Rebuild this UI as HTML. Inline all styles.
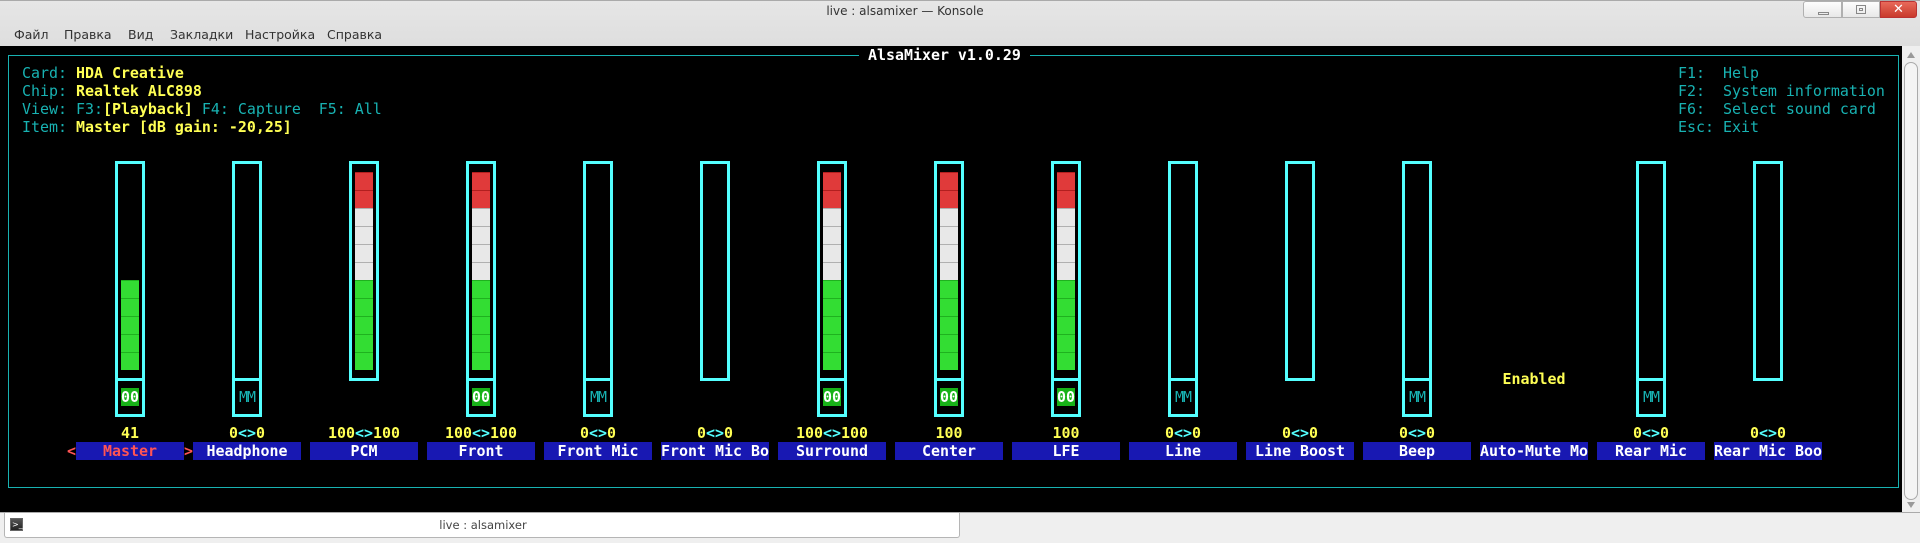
<!DOCTYPE html>
<html><head><meta charset="utf-8"><style>
*{margin:0;padding:0;box-sizing:border-box}
body{width:1920px;height:543px;overflow:hidden;background:#efefef;position:relative;font-family:"DejaVu Sans","Liberation Sans",sans-serif}
#title{position:absolute;left:0;top:0;width:1920px;height:46px;background:linear-gradient(#e6e6e6,#dedede);border-top:1px solid #aaa}
#title .t{position:absolute;left:0;width:1810px;top:3px;text-align:center;font-size:12px;color:#333}
.menu{position:absolute;top:26px;font-size:12.5px;color:#333}
.wb{position:absolute;top:0;height:17px;border:1px solid #b0b0b0;background:linear-gradient(#fdfdfd,#e8e8e8)}
#term{position:absolute;left:0;top:46px;width:1902px;height:466px;background:#000}
#sb{position:absolute;left:1902px;top:46px;width:18px;height:466px;background:#efefef}
.mono{font-family:"DejaVu Sans Mono","Liberation Mono",monospace;font-size:14.95px;line-height:18px;white-space:pre;position:absolute}
.c{color:#18b2b2}.y{color:#ffff54;font-weight:bold}.w{color:#fff;font-weight:bold}
.ch{position:absolute;top:0;width:200px;height:512px}
.box{position:absolute;left:111px;top:161px;width:30px;height:220px;border:3px solid #54ffff}
.low{position:absolute;left:111px;top:378px;width:30px;height:39px;border:3px solid #54ffff}
.fill{position:absolute;left:117px;width:18px}
.g{background:repeating-linear-gradient(#1fb21f 0 1px,#33dd33 1px 18px)}
.r{background:repeating-linear-gradient(#b21f1f 0 1px,#e03a3a 1px 18px)}
.wh{background:repeating-linear-gradient(#b0b0b0 0 1px,#e8e8e8 1px 18px)}
.oo{position:absolute;left:117px;top:388px;width:18px;height:18px;background:#18b218;color:#fff;font-weight:bold;text-align:center}
.mm{position:absolute;left:117px;top:388px;width:18px;text-align:center;color:#18b2b2;letter-spacing:-1px}
.val{position:absolute;left:72px;top:424px;width:108px;text-align:center}
.lab{position:absolute;left:72px;top:442px;width:108px;height:18px;background:#1818b2;color:#fff;font-weight:bold;text-align:center;overflow:hidden}
.ar{color:#54ffff}
</style></head><body>
<div id="title"><div class="t">live : alsamixer — Konsole</div>
<div class="menu" style="left:14px">Файл</div>
<div class="menu" style="left:64px">Правка</div>
<div class="menu" style="left:128px">Вид</div>
<div class="menu" style="left:170px">Закладки</div>
<div class="menu" style="left:245px">Настройка</div>
<div class="menu" style="left:327px">Справка</div>
<div class="wb" style="left:1803px;width:39px;border-radius:3px 0 0 3px"><div style="position:absolute;left:14px;top:10px;width:11px;height:3px;border:1px solid #888"></div></div>
<div class="wb" style="left:1842px;width:38px"><div style="position:absolute;left:13px;top:3px;width:10px;height:9px;border:1px solid #888"></div><div style="position:absolute;left:16px;top:6px;width:4px;height:3px;border:1px solid #888"></div></div>
<div class="wb" style="left:1880px;width:37px;background:linear-gradient(#e86a5a,#c93a2c);border-color:#b33;border-radius:0 3px 3px 0;color:#fff;font-weight:bold;font-size:13px;text-align:center;line-height:15px">✕</div>
</div>
<div id="term">
<div style="position:absolute;left:8px;top:9px;width:1891px;height:433px;border:1.5px solid #18b2b2"></div>
</div>
<div class="mono" style="left:859px;top:46px;background:#000;color:#fff;font-weight:bold"> AlsaMixer v1.0.29 </div>
<div class="mono" style="left:22px;top:64px"><span class="c">Card: </span><span class="y">HDA Creative</span>
<span class="c">Chip: </span><span class="y">Realtek ALC898</span>
<span class="c">View: F3:</span><span class="y">[Playback]</span><span class="c"> F4: Capture  F5: All</span>
<span class="c">Item: </span><span class="y">Master [dB gain: -20,25]</span></div>
<div class="mono c" style="left:1678px;top:64px">F1:  Help
F2:  System information
F6:  Select sound card
Esc: Exit</div>

<div class="mono" style="left:0;top:0;width:1902px;height:512px">
<!-- 0 Master -->
<div class="ch" style="left:4px"><div class="box"></div><div class="fill g" style="top:280px;height:90px"></div><div class="low"></div><div class="oo">00</div><div class="val y">41</div><div class="lab" style="color:#ff5454">Master</div><div style="position:absolute;left:63px;top:442px;color:#ff5454;font-weight:bold">&lt;</div><div style="position:absolute;left:180px;top:442px;color:#ff5454;font-weight:bold">&gt;</div></div>
<!-- 1 Headphone -->
<div class="ch" style="left:121px"><div class="box"></div><div class="low"></div><div class="mm">MM</div><div class="val y">0<span class="ar">&lt;&gt;</span>0</div><div class="lab">Headphone</div></div>
<!-- 2 PCM -->
<div class="ch" style="left:238px"><div class="box"></div><div class="fill r" style="top:172px;height:36px"></div><div class="fill wh" style="top:208px;height:72px"></div><div class="fill g" style="top:280px;height:90px"></div><div class="val y">100<span class="ar">&lt;&gt;</span>100</div><div class="lab">PCM</div></div>
<!-- 3 Front -->
<div class="ch" style="left:355px"><div class="box"></div><div class="fill r" style="top:172px;height:36px"></div><div class="fill wh" style="top:208px;height:72px"></div><div class="fill g" style="top:280px;height:90px"></div><div class="low"></div><div class="oo">00</div><div class="val y">100<span class="ar">&lt;&gt;</span>100</div><div class="lab">Front</div></div>
<!-- 4 Front Mic -->
<div class="ch" style="left:472px"><div class="box"></div><div class="low"></div><div class="mm">MM</div><div class="val y">0<span class="ar">&lt;&gt;</span>0</div><div class="lab">Front Mic</div></div>
<!-- 5 Front Mic Bo -->
<div class="ch" style="left:589px"><div class="box"></div><div class="val y">0<span class="ar">&lt;&gt;</span>0</div><div class="lab">Front Mic Bo</div></div>
<!-- 6 Surround -->
<div class="ch" style="left:706px"><div class="box"></div><div class="fill r" style="top:172px;height:36px"></div><div class="fill wh" style="top:208px;height:72px"></div><div class="fill g" style="top:280px;height:90px"></div><div class="low"></div><div class="oo">00</div><div class="val y">100<span class="ar">&lt;&gt;</span>100</div><div class="lab">Surround</div></div>
<!-- 7 Center -->
<div class="ch" style="left:823px"><div class="box"></div><div class="fill r" style="top:172px;height:36px"></div><div class="fill wh" style="top:208px;height:72px"></div><div class="fill g" style="top:280px;height:90px"></div><div class="low"></div><div class="oo">00</div><div class="val y">100</div><div class="lab">Center</div></div>
<!-- 8 LFE -->
<div class="ch" style="left:940px"><div class="box"></div><div class="fill r" style="top:172px;height:36px"></div><div class="fill wh" style="top:208px;height:72px"></div><div class="fill g" style="top:280px;height:90px"></div><div class="low"></div><div class="oo">00</div><div class="val y">100</div><div class="lab">LFE</div></div>
<!-- 9 Line -->
<div class="ch" style="left:1057px"><div class="box"></div><div class="low"></div><div class="mm">MM</div><div class="val y">0<span class="ar">&lt;&gt;</span>0</div><div class="lab">Line</div></div>
<!-- 10 Line Boost -->
<div class="ch" style="left:1174px"><div class="box"></div><div class="val y">0<span class="ar">&lt;&gt;</span>0</div><div class="lab">Line Boost</div></div>
<!-- 11 Beep -->
<div class="ch" style="left:1291px"><div class="box"></div><div class="low"></div><div class="mm">MM</div><div class="val y">0<span class="ar">&lt;&gt;</span>0</div><div class="lab">Beep</div></div>
<!-- 12 Auto-Mute -->
<div class="ch" style="left:1408px"><div class="y" style="position:absolute;left:72px;top:370px;width:108px;text-align:center">Enabled</div><div class="lab">Auto-Mute Mo</div></div>
<!-- 13 Rear Mic -->
<div class="ch" style="left:1525px"><div class="box"></div><div class="low"></div><div class="mm">MM</div><div class="val y">0<span class="ar">&lt;&gt;</span>0</div><div class="lab">Rear Mic</div></div>
<!-- 14 Rear Mic Boo -->
<div class="ch" style="left:1642px"><div class="box"></div><div class="val y">0<span class="ar">&lt;&gt;</span>0</div><div class="lab">Rear Mic Boo</div></div>
</div>

<div id="sb">
<div style="position:absolute;left:5px;top:6px;width:0;height:0;border-left:4px solid transparent;border-right:4px solid transparent;border-bottom:6px solid #999"></div>
<div style="position:absolute;left:2px;top:16px;width:14px;height:438px;border:1px solid #aaa;border-radius:7px;background:#f4f4f4"></div>
<div style="position:absolute;left:5px;top:456px;width:0;height:0;border-left:4px solid transparent;border-right:4px solid transparent;border-top:6px solid #999"></div>
</div>
<div style="position:absolute;left:0;top:512px;width:1920px;height:1px;background:#aaa"></div>
<div style="position:absolute;left:4px;top:513px;width:956px;height:25px;background:#fff;border:1px solid #b5b5b5;border-top:none;border-radius:0 0 3px 3px">
<div style="position:absolute;left:5px;top:5px;width:13px;height:13px;border:1px solid #666;background:linear-gradient(#555,#222);color:#fff;font-size:8px;line-height:11px;padding-left:1px">&gt;_</div>
<div style="position:absolute;left:0;width:956px;top:5px;text-align:center;font-size:11.5px;color:#444">live : alsamixer</div>
</div>
</body></html>
